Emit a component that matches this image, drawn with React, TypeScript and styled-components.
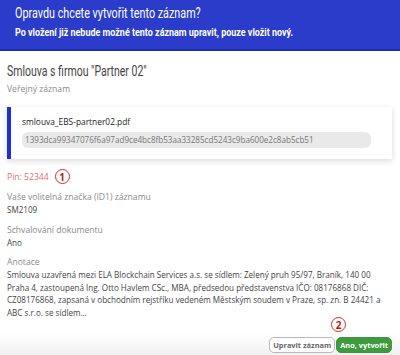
import React, { FC } from "react";
import styled, { createGlobalStyle } from "styled-components";

const GlobalStyle = createGlobalStyle`
  html, body {
    margin: 0;
    padding: 0;
    background: #fff;
  }
  body {
    width: 400px;
    height: 355px;
    overflow: hidden;
    font-family: "Open Sans", "Noto Sans", sans-serif;
  }
`;

// no condensed face installed, so Roboto gets squeezed horizontally
const Condensed = styled.span<{ squeeze: number }>`
  display: inline-block;
  white-space: nowrap;
  font-family: Roboto, "Liberation Sans", sans-serif;
  transform: scaleX(${(p) => p.squeeze});
  transform-origin: left center;
`;

interface FieldProps {
  label: string;
  value: string;
}

const Field: FC<FieldProps> = ({ label, value }) => (
  <FieldGroup>
    <Label>{label}</Label>
    <Value>{value}</Value>
  </FieldGroup>
);

const App: FC = () => {
  return (
    <>
      <GlobalStyle />
      <Dialog>
        <Header>
          <Title>
            <Condensed squeeze={0.72}>Opravdu chcete vytvořit tento záznam?</Condensed>
          </Title>
          <Subtitle>
            <Condensed squeeze={0.78}>
              Po vložení již nebude možné tento záznam upravit, pouze vložit nový.
            </Condensed>
          </Subtitle>
        </Header>

        <Body>
          <RecordTitle>
            <Condensed squeeze={0.7}>Smlouva s firmou "Partner 02"</Condensed>
          </RecordTitle>
          <Muted>Veřejný záznam</Muted>

          <FileCard>
            <FileName>smlouva_EBS-partner02.pdf</FileName>
            <Hash>1393dca99347076f6a97ad9ce4bc8fb53aa33285cd5243c9ba600e2c8ab5cb51</Hash>
          </FileCard>

          <PinRow>
            <Pin>Pin: 52344</Pin>
            <Marker>1</Marker>
          </PinRow>

          <Field label="Vaše volitelná značka (ID1) záznamu" value="SM2109" />
          <Field label="Schvalování dokumentu" value="Ano" />
          <Field
            label="Anotace"
            value="Smlouva uzavřená mezi ELA Blockchain Services a.s. se sídlem: Zelený pruh 95/97, Braník, 140 00 Praha 4, zastoupená Ing. Otto Havlem CSc., MBA, předsedou představenstva IČO: 08176868 DIČ: CZ08176868, zapsaná v obchodním rejstříku vedeném Městským soudem v Praze, sp. zn. B 24421 a ABC s.r.o. se sídlem..."
          />
        </Body>

        <Footer>
          <FooterMarker>2</FooterMarker>
          <Button>Upravit záznam</Button>
          <Button primary>Ano, vytvořit</Button>
        </Footer>
      </Dialog>
    </>
  );
};

const Dialog = styled.div`
  width: 400px;
  height: 355px;
  display: flex;
  flex-direction: column;
`;

const Header = styled.div`
  background: #2a3cc9;
  border-bottom: 2px solid #1b2cb5;
  height: 51px;
  box-sizing: border-box;
  padding: 3px 15px 0;
  color: #fff;
`;

const Title = styled.div`
  font-size: 15px;
  line-height: 19px;
`;

const Subtitle = styled.div`
  font-size: 11.5px;
  font-weight: bold;
  line-height: 17px;
`;

const Body = styled.div`
  flex: 1;
  padding: 0 8px 0 7px;
`;

const RecordTitle = styled.div`
  font-size: 15px;
  color: #444;
  margin-top: 10px;
  line-height: 18px;
`;

const Muted = styled.div`
  font-size: 8.6px;
  color: #8a8a8a;
  margin-top: 3px;
`;

const FileCard = styled.div`
  margin-top: 12px;
  border-left: 4px solid #1f2fd0;
  box-shadow: 0 2px 6px rgba(0, 0, 0, 0.15);
  padding: 9px 21px 9px 11px;
  height: 52px;
  box-sizing: border-box;
`;

const FileName = styled.div`
  font-size: 8.4px;
  color: #222;
  line-height: 12px;
`;

const Hash = styled.div`
  margin-top: 4px;
  background: #e9e9e9;
  border-radius: 6px;
  font-size: 8.1px;
  color: #777;
  padding: 2px 3px;
  line-height: 12px;
`;

const PinRow = styled.div`
  display: flex;
  align-items: center;
  gap: 6px;
  margin-top: 10px;
`;

const Pin = styled.div`
  font-size: 8.6px;
  color: #e0706f;
`;

const Marker = styled.div`
  width: 13px;
  height: 13px;
  border: 1.5px solid #e0281e;
  border-radius: 50%;
  color: #b81a14;
  font-size: 10px;
  font-weight: bold;
  display: flex;
  align-items: center;
  justify-content: center;
  line-height: 1;
`;

const FooterMarker = styled(Marker)`
  position: absolute;
  right: 54px;
  top: -16px;
`;

const FieldGroup = styled.div`
  margin-top: 7px;
`;

const Label = styled.div`
  font-size: 8.6px;
  color: #8a8a8a;
  line-height: 13px;
`;

const Value = styled.div`
  font-size: 8.1px;
  color: #444;
  line-height: 12.5px;
`;

const Footer = styled.div`
  position: relative;
  display: flex;
  justify-content: flex-end;
  align-items: flex-end;
  gap: 1px;
  height: 22px;
  box-sizing: border-box;
  padding: 0 8px 2px;
  background: linear-gradient(#fff, #f1f1f1);
`;

const Button = styled.button<{ primary?: boolean }>`
  font-family: "Open Sans", sans-serif;
  font-size: 7.4px;
  font-weight: bold;
  height: 16px;
  padding: 0 3px;
  border-radius: 5px;
  border: 1px solid ${(p) => (p.primary ? "#3d983d" : "#b9b9b9")};
  background: ${(p) => (p.primary ? "#3e9a3e" : "#fff")};
  color: ${(p) => (p.primary ? "#fff" : "#666")};
  cursor: pointer;
`;

export default App;
